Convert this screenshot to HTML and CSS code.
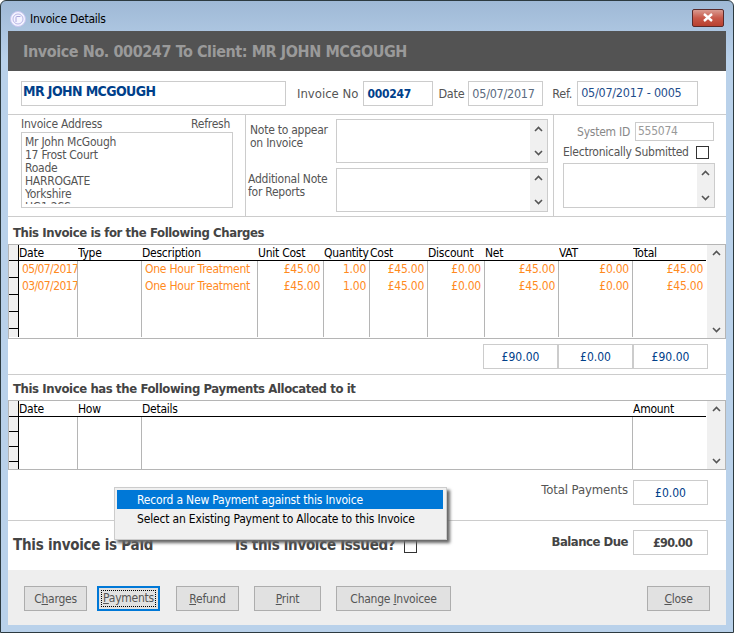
FILE: index.html
```html
<!DOCTYPE html>
<html lang="en">
<head>
  <meta charset="UTF-8" />
  <title>Invoice Details</title>
  <link rel="stylesheet" href="styles.css">
</head>
<body>
  <svg class="defs" width="0" height="0">
    <symbol id="chev-up" viewBox="0 0 9 6"><path d="M1 5 L4.5 1.5 L8 5" fill="none" stroke="#555" stroke-width="1.6"/></symbol>
    <symbol id="chev-down" viewBox="0 0 9 6"><path d="M1 1 L4.5 4.5 L8 1" fill="none" stroke="#555" stroke-width="1.6"/></symbol>
  </svg>

  <div class="window">
    <div class="titlebar">
      <div class="app-icon">
        <svg width="16" height="16" viewBox="0 0 16 16"><circle cx="8" cy="8" r="7.5" fill="#f4f4ff" stroke="#c9c6f0"/><circle cx="8" cy="8" r="5" fill="none" stroke="#b9b6e6"/><path d="M6 11 V6.5 Q6 5.5 7 5.5 H10.5" fill="none" stroke="#a9a6dc"/></svg>
      </div>
      <span class="window-title">Invoice Details</span>
      <div class="close-x">
        <svg width="12" height="9" viewBox="0 0 12 9"><path d="M2 1 L10 8 M10 1 L2 8" stroke="#fff" stroke-width="2.4"/></svg>
      </div>
    </div>

    <div class="client">
      <div class="banner">Invoice No. 000247 To Client: MR JOHN MCGOUGH</div>

      <div class="top-row">
        <div class="field name-box">MR JOHN MCGOUGH</div>
        <label class="lbl lbl-no">Invoice No</label>
        <div class="field inv-no">000247</div>
        <label class="lbl lbl-date">Date</label>
        <div class="field date-box">05/07/2017</div>
        <label class="lbl lbl-ref">Ref.</label>
        <div class="field ref-box">05/07/2017 - 0005</div>
      </div>

      <div class="details">
        <div class="address-col">
          <div class="address-head"><span>Invoice Address</span><span>Refresh</span></div>
          <div class="address-box"><div class="address-text">Mr John McGough<br>17 Frost Court<br>Roade<br>HARROGATE<br>Yorkshire<br>HG1 2SS</div></div>
        </div>
        <div class="notes-col">
          <div class="note-row">
            <div class="note-label note-label-a">Note to appear<br>on Invoice</div>
            <div class="memo">
              <div class="scroll"><svg class="chev"><use href="#chev-up"/></svg><svg class="chev"><use href="#chev-down"/></svg></div>
            </div>
          </div>
          <div class="note-row">
            <div class="note-label">Additional Note<br>for Reports</div>
            <div class="memo">
              <div class="scroll"><svg class="chev"><use href="#chev-up"/></svg><svg class="chev"><use href="#chev-down"/></svg></div>
            </div>
          </div>
        </div>
        <div class="system-col">
          <div class="system-row"><span class="muted">System ID</span><div class="system-id">555074</div></div>
          <div class="submitted-row"><span>Electronically Submitted</span><div class="check"></div></div>
          <div class="memo system-memo">
            <div class="scroll"><svg class="chev"><use href="#chev-up"/></svg><svg class="chev"><use href="#chev-down"/></svg></div>
          </div>
        </div>
      </div>

      <div class="section-title charges-title">This Invoice is for the Following Charges</div>
      <div class="grid charges-grid">
        <table class="sheet">
          <colgroup><col class="c-sel"><col class="c-date"><col class="c-type"><col class="c-desc"><col class="c-unit"><col class="c-qty"><col class="c-cost"><col class="c-disc"><col class="c-net"><col class="c-vat"><col></colgroup>
          <thead>
            <tr><th class="sel"></th><th>Date</th><th>Type</th><th>Description</th><th>Unit Cost</th><th>Quantity</th><th>Cost</th><th>Discount</th><th>Net</th><th>VAT</th><th>Total</th></tr>
          </thead>
          <tbody>
            <tr><td class="sel"></td><td class="date">05/07/2017</td><td></td><td class="desc">One Hour Treatment</td><td class="num">£45.00</td><td class="num">1.00</td><td class="num">£45.00</td><td class="num">£0.00</td><td class="num">£45.00</td><td class="num">£0.00</td><td class="num">£45.00</td></tr>
            <tr><td class="sel"></td><td class="date">03/07/2017</td><td></td><td class="desc">One Hour Treatment</td><td class="num">£45.00</td><td class="num">1.00</td><td class="num">£45.00</td><td class="num">£0.00</td><td class="num">£45.00</td><td class="num">£0.00</td><td class="num">£45.00</td></tr>
            <tr><td class="sel"></td><td></td><td></td><td></td><td></td><td></td><td></td><td></td><td></td><td></td><td></td></tr>
            <tr><td class="sel"></td><td></td><td></td><td></td><td></td><td></td><td></td><td></td><td></td><td></td><td></td></tr>
            <tr class="cut"><td class="sel"></td><td></td><td></td><td></td><td></td><td></td><td></td><td></td><td></td><td></td><td></td></tr>
          </tbody>
        </table>
        <div class="scroll grid-scroll"><svg class="chev"><use href="#chev-up"/></svg><svg class="chev"><use href="#chev-down"/></svg></div>
      </div>

      <div class="totals">
        <div class="field total-box">£90.00</div>
        <div class="field total-box">£0.00</div>
        <div class="field total-box">£90.00</div>
      </div>

      <div class="section-title payments-title">This Invoice has the Following Payments Allocated to it</div>
      <div class="grid payments-grid">
        <table class="sheet">
          <colgroup><col class="c-sel"><col class="c-date"><col class="c-type"><col class="c-details"><col></colgroup>
          <thead>
            <tr><th class="sel"></th><th>Date</th><th>How</th><th>Details</th><th>Amount</th></tr>
          </thead>
          <tbody>
            <tr><td class="sel"></td><td></td><td></td><td></td><td></td></tr>
            <tr><td class="sel"></td><td></td><td></td><td></td><td></td></tr>
            <tr><td class="sel"></td><td></td><td></td><td></td><td></td></tr>
            <tr class="cut"><td class="sel"></td><td></td><td></td><td></td><td></td></tr>
          </tbody>
        </table>
        <div class="scroll grid-scroll"><svg class="chev"><use href="#chev-up"/></svg><svg class="chev"><use href="#chev-down"/></svg></div>
      </div>

      <div class="summary">
        <span class="lbl total-label">Total Payments</span>
        <div class="field total-box">£0.00</div>
      </div>

      <div class="balance">
        <span class="paid">This invoice is Paid</span>
        <span class="issued">Is this invoice Issued?</span>
        <div class="check"></div>
        <span class="balance-label">Balance Due</span>
        <div class="field total-box balance-box">£90.00</div>
      </div>

      <div class="footer">
        <button class="btn b-charges">C<u>h</u>arges</button>
        <button class="btn b-payments"><span class="focus"><u>P</u>ayments</span></button>
        <button class="btn b-refund"><u>R</u>efund</button>
        <button class="btn b-print"><u>P</u>rint</button>
        <button class="btn b-change">Change <u>I</u>nvoicee</button>
        <button class="btn b-close"><u>C</u>lose</button>
      </div>
    </div>

    <div class="popup">
      <div class="popup-item active">Record a New Payment against this Invoice</div>
      <div class="popup-item">Select an Existing Payment to Allocate to this Invoice</div>
    </div>
  </div>
</body>
</html>
```
FILE: styles.css
```css
* {
  box-sizing: border-box;
}
body {
  margin: 0;
  font-family: "DejaVu Sans Condensed", "DejaVu Sans", sans-serif;
  font-size: 12px;
  letter-spacing: -0.25px;
  color: #555;
  background: #fff;
}
.defs {
  position: absolute;
}
.window {
  position: relative;
  width: 734px;
  height: 633px;
  padding: 0 7px 7px;
  border: 1px solid #2c3a40;
  border-radius: 6px 6px 0 0;
  background: linear-gradient(to bottom, #9fb9d6 0, #b9d1ea 60px, #b9d1ea 100%);
  overflow: hidden;
}
.titlebar {
  display: flex;
  align-items: center;
  height: 30px;
  margin-left: 2px;
  padding-top: 6px;
}
.app-icon {
  display: flex;
  width: 20px;
}
.window-title {
  color: #000;
}
.close-x {
  display: flex;
  align-items: center;
  justify-content: center;
  width: 32px;
  height: 18px;
  margin-left: auto;
  margin-right: 2px;
  margin-top: -3px;
  border: 1px solid #5a2a2a;
  border-radius: 2px;
  background: linear-gradient(to bottom, #d99a90 0, #c8594a 50%, #b8402f 100%);
}
.client {
  display: flex;
  flex-direction: column;
  height: 594px;
  background: #fff;
}
.banner {
  height: 40px;
  padding: 0 15px;
  line-height: 41px;
  font-size: 16px;
  font-weight: bold;
  letter-spacing: -0.42px;
  color: #9a9a9a;
  background: #535353;
}
.top-row {
  display: flex;
  align-items: center;
  height: 44px;
  padding: 2px 0 0 13px;
  border-bottom: 1px solid #ccc;
}
.field {
  height: 25px;
  border: 1px solid #ccc;
  color: #1f4e8c;
}
.name-box {
  width: 265px;
  padding-left: 1px;
  font-size: 14px;
  font-weight: bold;
  letter-spacing: -0.6px;
  line-height: 18px;
  color: #00408a;
}
.lbl {
  color: #555;
}
.lbl-no {
  margin-left: 11px;
  font-size: 13px;
  letter-spacing: 0;
}
.inv-no {
  width: 70px;
  margin-left: 5px;
  padding-left: 3px;
  line-height: 24px;
  font-weight: bold;
  color: #00408a;
}
.lbl-date {
  margin-left: 5px;
  font-size: 12.5px;
}
.date-box {
  width: 75px;
  margin-left: 4px;
  padding-left: 3px;
  line-height: 24px;
  font-size: 12.5px;
  color: #5b6b80;
}
.lbl-ref {
  margin-left: 9px;
  font-size: 12.5px;
}
.ref-box {
  width: 121px;
  margin-left: 5px;
  padding-left: 3px;
  line-height: 22px;
  font-size: 12.5px;
  color: #1f4e8c;
}
.details {
  display: grid;
  grid-template-columns: 238px 308px 1fr;
  height: 102px;
  border-bottom: 1px solid #ccc;
}
.address-col {
  padding: 2px 12px 0 13px;
  border-right: 1px solid #ccc;
}
.address-head {
  display: flex;
  justify-content: space-between;
  height: 15px;
  padding-right: 3px;
  line-height: 15px;
}
.address-box {
  height: 76px;
  padding: 3px 3px 0;
  border: 1px solid #ccc;
  line-height: 13px;
}
.address-text {
  height: 68px;
  overflow: hidden;
}
.notes-col {
  display: flex;
  flex-direction: column;
  gap: 5px;
  padding: 4px 0 0 2px;
  border-right: 1px solid #ccc;
}
.note-row {
  display: flex;
}
.note-label {
  width: 88px;
  padding-top: 5px;
  line-height: 13px;
}
.note-label-a {
  padding-left: 2px;
}
.memo {
  display: flex;
  justify-content: flex-end;
  width: 212px;
  height: 44px;
  border: 1px solid #ccc;
}
.scroll {
  display: flex;
  flex-direction: column;
  justify-content: space-between;
  align-items: center;
  width: 17px;
  padding: 6px 0;
  background: #f0f0f0;
}
.chev {
  display: block;
  width: 9px;
  height: 6px;
}
.system-col {
  padding: 7px 0 0 9px;
}
.system-row {
  display: flex;
  justify-content: flex-end;
  align-items: center;
  gap: 5px;
  width: 151px;
  height: 19px;
}
.muted {
  color: #888;
}
.system-id {
  width: 79px;
  height: 19px;
  padding-left: 2px;
  border: 1px solid #ccc;
  line-height: 16px;
  color: #999;
}
.submitted-row {
  display: flex;
  align-items: center;
  justify-content: space-between;
  width: 146px;
  height: 22px;
}
.check {
  width: 13px;
  height: 13px;
  border: 1px solid #333;
}
.system-memo {
  width: 152px;
  height: 45px;
}
.section-title {
  padding-left: 5px;
  font-size: 13px;
  font-weight: bold;
  letter-spacing: -0.4px;
  color: #444;
}
.charges-title {
  height: 27px;
  line-height: 31px;
}
.payments-title {
  height: 25px;
  line-height: 27px;
}
.grid {
  display: flex;
  border: 1px solid #b5b5b5;
  overflow: hidden;
}
.charges-grid {
  height: 95px;
}
.payments-grid {
  height: 70px;
}
.sheet {
  flex: 1;
  table-layout: fixed;
  border-collapse: separate;
  border-spacing: 0;
  width: 698px;
  height: 0;
}
.c-sel { width: 10px; }
.c-date { width: 59px; }
.c-type { width: 64px; }
.c-desc { width: 116px; }
.c-unit { width: 66px; }
.c-qty { width: 46px; }
.c-cost { width: 58px; }
.c-disc { width: 57px; }
.c-net { width: 74px; }
.c-vat { width: 74px; }
.c-details { width: 491px; }
.sheet th {
  height: 16px;
  padding: 0;
  border-bottom: 1px solid #000;
  font-weight: normal;
  text-align: left;
  color: #000;
  white-space: nowrap;
  overflow: hidden;
}
.sheet td {
  padding: 0;
  border-right: 1px solid #b5b5b5;
  color: #ff8a1e;
  line-height: 16px;
  vertical-align: top;
  white-space: nowrap;
  overflow: hidden;
}
.sheet td:last-child {
  border-right: 0;
}
.charges-grid td {
  height: 17px;
}
.payments-grid td {
  height: 15px;
}
.sheet tr.cut td {
  height: 8px;
  font-size: 0;
}
.sheet th.sel,
.sheet td.sel {
  background: #f0f0f0;
  border-right: 1px solid #000;
  border-bottom: 1px solid #000;
}
.sheet tr.cut td.sel {
  border-bottom: 0;
}
.sheet td.date {
  padding-left: 3px;
  letter-spacing: -0.6px;
}
.sheet td.desc {
  padding-left: 3px;
}
.sheet td.num {
  padding-right: 3px;
  text-align: right;
}
.grid-scroll {
  flex: none;
  width: 18px;
  padding: 5px 0;
  margin-left: 1px;
}
.totals {
  display: flex;
  justify-content: flex-end;
  align-items: flex-start;
  height: 36px;
  padding: 5px 18px 0 0;
  border-bottom: 1px solid #ccc;
}
.total-box {
  width: 75px;
  height: 25px;
  line-height: 24px;
  text-align: center;
  letter-spacing: 0;
  color: #00408a;
}
.summary {
  display: flex;
  justify-content: flex-end;
  gap: 5px;
  height: 51px;
  padding: 10px 18px 0 0;
  border-bottom: 1px solid #ccc;
}
.total-label {
  font-size: 13px;
  letter-spacing: -0.1px;
  line-height: 20px;
}
.balance {
  display: flex;
  align-items: flex-start;
  height: 49px;
  padding: 9px 18px 0 5px;
}
.paid {
  width: 222px;
  font-size: 15px;
  font-weight: bold;
  line-height: 30px;
  color: #444;
}
.issued {
  width: 169px;
  font-size: 15px;
  font-weight: bold;
  letter-spacing: -0.3px;
  line-height: 30px;
  color: #444;
}
.balance .check {
  margin-top: 10px;
}
.balance-label {
  margin-left: auto;
  margin-right: 5px;
  font-size: 13px;
  font-weight: bold;
  letter-spacing: -0.5px;
  line-height: 24px;
  color: #444;
}
.balance-box {
  padding-left: 4px;
  font-weight: bold;
  font-size: 12.5px;
  letter-spacing: -0.7px;
  color: #444;
}
.footer {
  display: flex;
  flex: 1;
  padding: 16px 0 0 16px;
  background: #eee;
}
.btn {
  height: 25px;
  padding: 0;
  border: 1px solid #adadad;
  background: #e1e1e1;
  font: inherit;
  letter-spacing: inherit;
  color: #555;
}
.b-charges { width: 63px; margin-right: 10px; }
.b-payments {
  width: 63px;
  margin-right: 16px;
  padding: 2px;
  border: 2px solid #0078d7;
}
.focus {
  display: block;
  height: 17px;
  line-height: 15px;
  border: 1px dotted #000;
}
.b-refund { width: 63px; margin-right: 15px; }
.b-print { width: 67px; margin-right: 15px; }
.b-change { width: 115px; }
.b-close { width: 63px; margin-left: auto; margin-right: 16px; }
.popup {
  position: absolute;
  left: 113px;
  top: 486px;
  width: 333px;
  height: 53px;
  padding: 2px;
  border: 1px solid #ccc;
  background: #f0f0f0;
  box-shadow: 3px 3px 3px #666;
  letter-spacing: -0.18px;
}
.popup-item {
  height: 19px;
  padding-left: 20px;
  margin-right: 1px;
  line-height: 20px;
  color: #000;
}
.popup-item.active {
  background: #0078d7;
  color: #fff;
}
```
